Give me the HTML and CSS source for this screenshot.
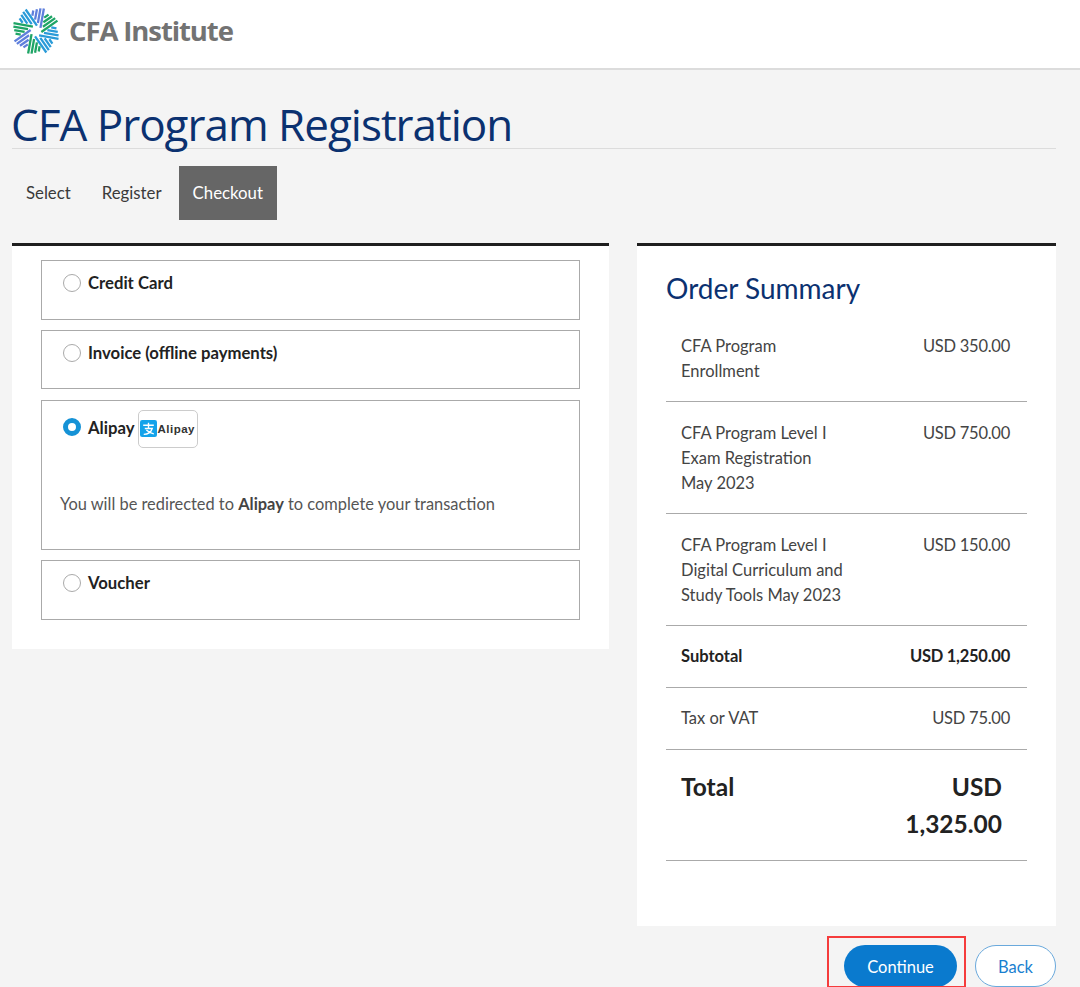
FILE: index.html
```html
<!DOCTYPE html>
<html lang="en">
<head>
<meta charset="utf-8">
<title>CFA Program Registration</title>
<link rel="stylesheet" href="styles.css">
</head>
<body>
<header class="topbar">
  <svg class="logo-mark" viewBox="-25 -25 50 50" aria-hidden="true">
    <defs>
      <g id="w"><path d="M-6.500 -20.500 V-15 M-3 -22.500 V-11.500 M0.500 -24 V-8.500 M4 -24.500 V-4" fill="none" stroke-width="2.400"/></g>
    </defs>
    <use href="#w" stroke="#2a9bd8" transform="rotate(-35)"/>
    <use href="#w" stroke="#5f7fdc" transform="rotate(10)"/>
    <use href="#w" stroke="#1fa566" transform="rotate(55)"/>
    <use href="#w" stroke="#2a9bd8" transform="rotate(100)"/>
    <use href="#w" stroke="#2a9bd8" transform="rotate(145)"/>
    <use href="#w" stroke="#1fa566" transform="rotate(190)"/>
    <use href="#w" stroke="#5f7fdc" transform="rotate(235)"/>
    <use href="#w" stroke="#1fa566" transform="rotate(280)"/>
  </svg>
  <span class="logo-text">CFA Institute</span>
</header>
<main class="page">
  <h1 class="title">CFA Program Registration</h1>
  <nav class="steps">
    <span class="step">Select</span>
    <span class="step">Register</span>
    <span class="step step-active">Checkout</span>
  </nav>
  <div class="columns">
    <section class="payment">
      <div class="option"><span class="radio"></span><span class="option-label">Credit Card</span></div>
      <div class="option"><span class="radio"></span><span class="option-label">Invoice (offline payments)</span></div>
      <div class="option option-open">
        <div class="option-head">
          <span class="radio radio-on"></span><span class="option-label">Alipay</span>
          <span class="alipay-badge">
            <svg class="alipay-icon" viewBox="0 0 16 16" aria-hidden="true">
              <rect width="16" height="16" rx="2" fill="#14a3ea"/>
              <path d="M3 5h10M8 2.500V8M4.500 8h7c-1 3-4 5.500-8 5.500M6 9.500c2 2 4 3 7 3.500" fill="none" stroke="#fff" stroke-width="1.300"/>
            </svg>
            <span class="alipay-word">Alipay</span>
          </span>
        </div>
        <p class="redirect">You will be redirected to <b>Alipay</b> to complete your transaction</p>
      </div>
      <div class="option"><span class="radio"></span><span class="option-label">Voucher</span></div>
    </section>
    <aside class="summary">
      <h2 class="summary-title">Order Summary</h2>
      <div class="row row-a"><span class="row-name">CFA Program<br>Enrollment</span><span class="amount">USD 350.00</span></div>
      <div class="row row-b"><span class="row-name">CFA Program Level I<br>Exam Registration<br>May 2023</span><span class="amount">USD 750.00</span></div>
      <div class="row row-b"><span class="row-name">CFA Program Level I<br>Digital Curriculum and<br>Study Tools May 2023</span><span class="amount">USD 150.00</span></div>
      <div class="row row-c row-bold"><span>Subtotal</span><span class="amount">USD 1,250.00</span></div>
      <div class="row row-c"><span>Tax or VAT</span><span class="amount">USD 75.00</span></div>
      <div class="row row-total"><span>Total</span><span class="total-value">USD<br>1,325.00</span></div>
    </aside>
  </div>
  <div class="actions">
    <span class="highlight"><button class="btn btn-primary">Continue</button></span>
    <button class="btn btn-ghost">Back</button>
  </div>
</main>
</body>
</html>
```
FILE: styles.css
```css
* { box-sizing: border-box; }
html, body { margin: 0; height: 987px; overflow: hidden; }
body { background: #f4f4f4; font-family: Lato, "Liberation Sans", sans-serif; font-size: 16.500px; color: #333; }

.topbar { height: 70px; background: #fff; border-bottom: 2px solid #dcdcdc; display: flex; align-items: center; padding: 0 0 7px 12px; gap: 9px; }
.logo-mark { width: 48px; height: 48px; }
.logo-text { font-family: "Open Sans", sans-serif; font-size: 27.500px; font-weight: 700; color: #737373; letter-spacing: -1.100px; }

.page { padding: 0 24px 0 12px; }
.title { margin: 0; height: 79px; padding-top: 27px; font-family: "Open Sans", sans-serif; font-weight: 400; font-size: 44px; line-height: 54px; color: #0b3170; border-bottom: 1px solid #dcdcdc; letter-spacing: -1px; text-indent: -1px; }

.steps { display: flex; height: 54px; margin-top: 17px; font-size: 16.800px; }
.step { padding: 0 14px 1px; display: flex; align-items: center; color: #3a3a3a; margin-right: 3px; }
.step-active { background: #666; color: #fff; margin: 0; }

.columns { display: flex; justify-content: space-between; align-items: flex-start; margin-top: 23px; }
.payment { width: 597px; background: #fff; border-top: 3px solid #1f1f1f; padding: 14px 29px 29px; display: flex; flex-direction: column; gap: 10.300px; }
.option { height: 59.500px; border: 1px solid #aaa; padding: 12px 21px; display: flex; align-items: flex-start; }
.option-open { height: 150.500px; display: block; }
.option-head { display: flex; align-items: flex-start; }
.radio { width: 18px; height: 18px; margin-top: 1px; border: 1px solid #aaa; border-radius: 50%; background: #fff; flex: none; }
.radio-on { border: 5px solid #1592d6; margin-top: 5px; }
.option-label { margin-left: 7px; font-weight: 700; font-size: 16.700px; color: #222; line-height: 20px; }
.option-head .option-label { margin-top: 5px; }
.alipay-badge { width: 60px; height: 38px; margin: -3px 0 0 4px; border: 1px solid #ccc; border-radius: 5px; background: #fff; display: flex; align-items: center; padding-left: 1px; }
.alipay-icon { width: 17px; height: 17px; flex: none; }
.alipay-word { font-family: "Liberation Sans", sans-serif; font-size: 11.500px; font-weight: 700; color: #333; letter-spacing: 0.5px; }
.redirect { margin: 45px 0 0 -3px; font-size: 16.400px; color: #555; line-height: 22px; }
.redirect b { color: #444; }

.summary { width: 419px; height: 683px; background: #fff; border-top: 3px solid #1f1f1f; padding: 25px 29px 0 29px; }
.summary-title { margin: 0 0 17px; font-weight: 400; font-size: 28px; line-height: 34px; color: #0b3170; }
.row { display: flex; justify-content: space-between; padding: 0 17px 0 15px; border-bottom: 1px solid #aaa; line-height: 25px; color: #444; }
.row-a { height: 80px; padding-top: 12px; }
.row-b { height: 112px; padding-top: 19px; }
.row-c { height: 62px; align-items: center; }
.row-name { width: 180px; }
.amount { letter-spacing: -0.250px; }
.row-bold { font-weight: 700; color: #222; }
.row-total { height: 111px; padding-top: 18px; padding-right: 25px; font-size: 24.500px; font-weight: 700; line-height: 37px; color: #222; }
.total-value { text-align: right; }

.actions { display: flex; justify-content: flex-end; align-items: flex-start; gap: 9px; margin-top: 19px; }
.highlight { display: block; width: 139px; height: 52px; margin-top: -9px; border: 2px solid #f53c3c; padding: 7px 0 0 15px; overflow: hidden; }
.btn { height: 42px; border-radius: 21px; font: 16.500px Lato, sans-serif; padding: 2px 0 0; }
.btn-primary { width: 113px; background: #0a7ace; border: 0; color: #fff; }
.btn-ghost { width: 81px; background: #fff; border: 1px solid #6aa9dc; color: #1a7fd0; }
```
